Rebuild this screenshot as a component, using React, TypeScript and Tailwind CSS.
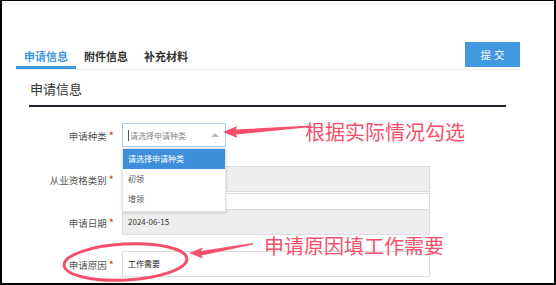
import { FC } from "react";

const font = { fontFamily: '"Noto Sans CJK SC", "Noto Sans", sans-serif' };

const Label: FC<{ text: string }> = ({ text }) => (
  <div className="w-[112px] shrink-0 text-right text-[9.5px] text-[#555] leading-[14px]">
    {text}
    <span className="text-[#d9302c] text-[11px] ml-[2px]">*</span>
  </div>
);

const App: FC = () => {
  return (
    <div
      style={font}
      className="relative w-[556px] h-[285px] overflow-hidden bg-white border-black border-t border-l-2 border-r-2 border-b-2"
    >
      <div className="mt-[2px] h-px bg-[#f0f0f0]" />

      {/* tab bar */}
      <div className="ml-[14px] w-[504px] h-[66px] flex items-end justify-between border-b border-[#ececec]">
        <div className="flex">
          <div className="w-[60px] pl-[8px] pb-[2px] border-b-[3px] border-[#3f97e0] text-[11px] leading-[16px] font-bold text-[#3f97e0]">
            申请信息
          </div>
          <div className="w-[60px] pl-[8px] pb-[2px] border-b-[3px] border-transparent text-[11px] leading-[16px] font-bold text-[#333]">
            附件信息
          </div>
          <div className="w-[60px] pl-[8px] pb-[2px] border-b-[3px] border-transparent text-[11px] leading-[16px] font-bold text-[#333]">
            补充材料
          </div>
        </div>
        <button className="mb-[2px] w-[55px] h-[25px] bg-[#4299e1] text-white text-[10.5px] tracking-[3px] pl-[3px]">
          提交
        </button>
      </div>

      {/* section title */}
      <div className="ml-[28px] mt-[9px] text-[13px] leading-[20px] text-[#333]">申请信息</div>
      <div className="ml-[27px] mt-[6px] w-[477px] h-[2px] bg-[#1c222d]" />

      {/* form */}
      <div className="mt-[16px] flex flex-col">
        <div className="flex items-center">
          <Label text="申请种类" />
          <div className="ml-[8px] w-[104px] h-[24px] border border-[#a9cdef] flex items-center justify-between pl-[5px] pr-[6px]">
            <span className="text-[8px] text-[#888] border-l border-[#555] pl-px leading-[11px]">请选择申请种类</span>
            <span className="w-0 h-0 border-l-[4px] border-r-[4px] border-b-[4px] border-l-transparent border-r-transparent border-b-[#bbb]" />
          </div>
        </div>

        <div className="flex items-center mt-[19px]">
          <Label text="从业资格类别" />
          <div className="ml-[8px] w-[308px] h-[26px] border border-[#ddd] bg-[#eeeeee]" />
        </div>

        <div className="flex mt-px">
          <div className="w-[112px] shrink-0" />
          <div className="ml-[8px] w-[308px] h-[16px] border-t border-x border-[#ddd] bg-white" />
        </div>

        <div className="flex items-center">
          <Label text="申请日期" />
          <div className="ml-[8px] w-[308px] h-[26px] border border-[#ddd] bg-[#eeeeee] flex items-center pl-[5px] text-[8px] text-[#333]">
            2024-06-15
          </div>
        </div>

        <div className="flex items-center mt-[16px]">
          <Label text="申请原因" />
          <div className="ml-[8px] w-[308px] h-[26px] border border-[#ddd] bg-white flex items-center pl-[5px] text-[8px] text-[#222]">
            工作需要
          </div>
        </div>
      </div>

      {/* open dropdown */}
      <div className="absolute left-[120px] top-[147px] w-[104px] h-[64px] bg-white border border-[#e2e2e2] shadow-[0_1px_3px_rgba(0,0,0,0.15)] text-[8px]">
        <div className="h-[20px] bg-[#3d8fdb] text-white flex items-center pl-[5px]">请选择申请种类</div>
        <div className="h-[20px] text-[#555] flex items-center pl-[5px]">初领</div>
        <div className="h-[20px] text-[#555] flex items-center pl-[5px]">增领</div>
      </div>

      {/* annotations */}
      <svg
        className="absolute left-[-2px] top-[-1px] pointer-events-none"
        width="556"
        height="285"
        viewBox="0 0 556 285"
      >
        <polygon
          points="223,132 237.5,126 235.5,129.5 311,125.5 311,127 236,134.5 237.5,138"
          fill="#f4506b"
        />
        <polygon
          points="189,253 203,247.5 201,251 253,243 253,244.5 201.5,255.5 203,258.5"
          fill="#f4506b"
        />
        <ellipse
          cx="125.5"
          cy="262"
          rx="61.5"
          ry="18"
          fill="none"
          stroke="#f4506b"
          strokeWidth="3"
          transform="rotate(-3 125.5 262)"
        />
      </svg>
      <div className="absolute left-[303px] top-[119px] text-[20px] leading-[24px] text-[#f4506b] whitespace-nowrap">
        根据实际情况勾选
      </div>
      <div className="absolute left-[262px] top-[233px] text-[20px] leading-[24px] text-[#f4506b] whitespace-nowrap">
        申请原因填工作需要
      </div>
    </div>
  );
};

export default App;
